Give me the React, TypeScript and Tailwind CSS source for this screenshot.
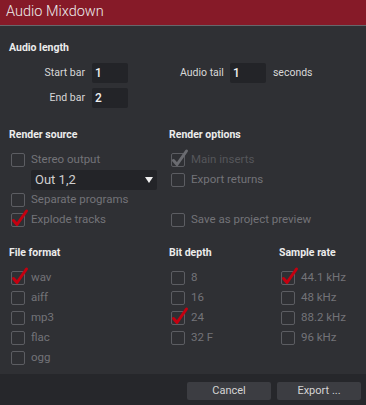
import React from "react";

const font = { fontFamily: "Roboto, 'Noto Sans', sans-serif" };

function Check({ checked, color = "#c40010" }: { checked?: boolean; color?: string }) {
  return (
    <div className="relative w-[14px] h-[14px] shrink-0 rounded-[2px] border-[1.5px] border-[#5c5d62]">
      {checked && (
        <svg
          className="absolute left-[-1px] top-[-5px] overflow-visible"
          width="18"
          height="18"
          viewBox="0 0 18 18"
        >
          <path d="M2.5 11.5 L6 15.5 L15.5 2" fill="none" stroke={color} strokeWidth="3" strokeLinecap="round" strokeLinejoin="round" />
        </svg>
      )}
    </div>
  );
}

function Row({ label, checked, color, dim }: { label: string; checked?: boolean; color?: string; dim?: boolean }) {
  return (
    <div className="flex h-[20px] items-center gap-[6px] pl-[2px]">
      <Check checked={checked} color={color} />
      <span className={`text-[11.5px] ${dim ? "text-[#55565a]" : "text-[#737378]"}`}>{label}</span>
    </div>
  );
}

function Header({ children }: { children: React.ReactNode }) {
  return <div className="h-[14px] text-[10.5px] font-bold leading-[14px] text-[#ececec]">{children}</div>;
}

function NumInput({ value }: { value: string }) {
  return (
    <div className="flex h-[20px] w-[36px] items-center rounded-[2px] bg-[#232428] pl-[3px] text-[12px] font-medium text-[#f0f0f0]">
      {value}
    </div>
  );
}

export default function App() {
  return (
    <div className="w-[366px] h-[405px] bg-[#2f3034] flex flex-col overflow-hidden" style={font}>
      <div className="h-[26px] bg-[#861a28] border-b border-[#66676b] flex items-center pl-[6px]">
        <span className="text-[14.5px] font-light text-[#ececec] leading-none">Audio Mixdown</span>
      </div>
      <div className="flex-1 flex flex-col pl-[9px]">
        <div className="pt-[15px]">
          <Header>Audio length</Header>
        </div>
        <div className="mt-[8px] flex">
          <div className="flex flex-col gap-[5px]">
            <div className="flex items-center gap-[7px]">
              <span className="w-[76px] text-right text-[10.5px] text-[#d8d8d8]">Start bar</span>
              <NumInput value="1" />
            </div>
            <div className="flex items-center gap-[7px]">
              <span className="w-[76px] text-right text-[10.5px] text-[#d8d8d8]">End bar</span>
              <NumInput value="2" />
            </div>
          </div>
          <div className="ml-[52px] flex h-[20px] items-center">
            <span className="text-[10.5px] text-[#d8d8d8]">Audio tail</span>
            <div className="ml-[6px]">
              <NumInput value="1" />
            </div>
            <span className="ml-[7px] text-[10.5px] text-[#d8d8d8]">seconds</span>
          </div>
        </div>

        <div className="mt-[20px] flex">
          <div className="w-[160px]">
            <Header>Render source</Header>
            <div className="mt-[8px]">
              <Row label="Stereo output" />
              <div className="flex h-[20px] items-center justify-between ml-[22px] w-[126px] rounded-[2px] bg-[#232428] pl-[4px] pr-[4px]">
                <span className="text-[13px] text-[#cfcfcf]">Out 1,2</span>
                <svg width="8" height="6" viewBox="0 0 8 6">
                  <path d="M0 0 L8 0 L4 6 Z" fill="#f0f0f0" />
                </svg>
              </div>
              <Row label="Separate programs" />
              <Row label="Explode tracks" checked />
            </div>
          </div>
          <div className="w-[180px]">
            <Header>Render options</Header>
            <div className="mt-[8px]">
              <Row label="Main inserts" checked color="#6a6b70" dim />
              <Row label="Export returns" />
              <div className="h-[20px]" />
              <Row label="Save as project preview" />
            </div>
          </div>
        </div>

        <div className="mt-[16px] flex">
          <div className="w-[160px]">
            <Header>File format</Header>
            <div className="mt-[8px]">
              <Row label="wav" checked />
              <Row label="aiff" />
              <Row label="mp3" />
              <Row label="flac" />
              <Row label="ogg" />
            </div>
          </div>
          <div className="w-[110px]">
            <Header>Bit depth</Header>
            <div className="mt-[8px]">
              <Row label="8" />
              <Row label="16" />
              <Row label="24" checked />
              <Row label="32 F" />
            </div>
          </div>
          <div className="w-[80px]">
            <Header>Sample rate</Header>
            <div className="mt-[8px]">
              <Row label="44.1 kHz" checked />
              <Row label="48 kHz" />
              <Row label="88.2 kHz" />
              <Row label="96 kHz" />
            </div>
          </div>
        </div>
      </div>
      <div className="h-[31px] bg-[#26272b] flex justify-end gap-[6px] pt-[8px] pr-[5px]">
        <button className="h-[18px] w-[84px] rounded-[2px] bg-[#3c3d42] text-[11px] text-[#d4d4d4]">Cancel</button>
        <button className="h-[18px] w-[84px] rounded-[2px] bg-[#3c3d42] text-[11px] text-[#d4d4d4]">Export ...</button>
      </div>
    </div>
  );
}
